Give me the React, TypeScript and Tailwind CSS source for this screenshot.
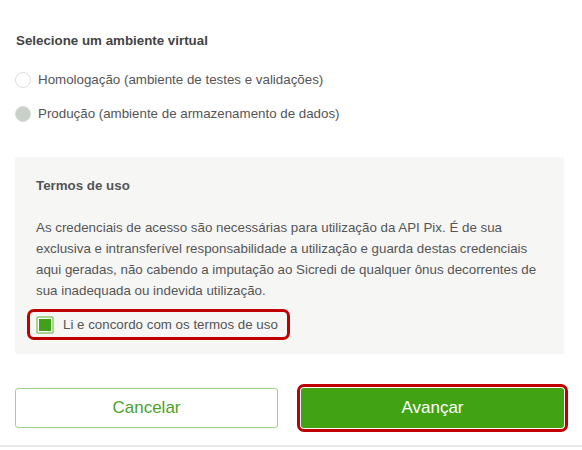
import React from "react";

export default function App() {
  return (
    <div className="w-[582px] h-[450px] bg-white relative overflow-hidden font-['Liberation_Sans',Arial,sans-serif]">
      <div className="px-[15px] pt-[32px] w-[579px]">
        <h2 className="text-[13.33px] leading-[18px] font-bold text-[#444] pl-[1px]">
          Selecione um ambiente virtual
        </h2>
        <div className="mt-[22px] flex flex-col gap-[18px]">
          <label className="flex items-center h-[16px] gap-[7px]">
            <span className="w-[16px] h-[16px] rounded-full border border-[#dcdcdc] bg-white shrink-0" />
            <span className="text-[13.33px] text-[#555] leading-[16px]">
              Homologação (ambiente de testes e validações)
            </span>
          </label>
          <label className="flex items-center h-[16px] gap-[7px]">
            <span className="w-[16px] h-[16px] rounded-full border border-[#d6dbd6] bg-[#c9d0c9] shrink-0" />
            <span className="text-[13.33px] text-[#555] leading-[16px]">
              Produção (ambiente de armazenamento de dados)
            </span>
          </label>
        </div>

        <div className="mt-[35px] bg-[#f6f6f5] rounded-[2px] pl-[21px] pr-[19px] pt-[20px] pb-[14px]">
          <h3 className="text-[13.33px] leading-[18px] font-bold text-[#555]">Termos de uso</h3>
          <p className="mt-[22px] text-[13.33px] leading-[21px] text-[#555]">
            As credenciais de acesso são necessárias para utilização da API Pix. É de sua
            exclusiva e intransferível responsabilidade a utilização e guarda destas credenciais
            aqui geradas, não cabendo a imputação ao Sicredi de qualquer ônus decorrentes de
            sua inadequada ou indevida utilização.
          </p>
          <label className="mt-[8px] -ml-[9px] inline-flex items-center h-[31px] border-[3px] border-[#c00000] rounded-[7px] pl-[6px] pr-[9px] gap-[9px]">
            <span className="w-[18px] h-[18px] border-2 border-[#a6d58f] bg-white p-[1px] rounded-[2px] shrink-0 flex">
              <span className="flex-1 bg-[#3fa116]" />
            </span>
            <span className="text-[13.33px] text-[#555] leading-[16px]">
              Li e concordo com os termos de uso
            </span>
          </label>
        </div>

        <div className="mt-[34px] flex gap-[23px]">
          <button className="w-[263px] h-[40px] border border-[#9fd386] rounded-[3px] bg-white text-[17px] text-[#4ba22b]">
            Cancelar
          </button>
          <button className="w-[263px] h-[40px] rounded-[3px] bg-[#41a214] text-[17px] text-white shadow-[0_0_0_1px_#ffffff,0_0_0_4px_#c00000]">
            Avançar
          </button>
        </div>
      </div>
      <div className="absolute left-0 right-0 top-[445px] h-[2px] bg-[#e8e8e8]" />
    </div>
  );
}
